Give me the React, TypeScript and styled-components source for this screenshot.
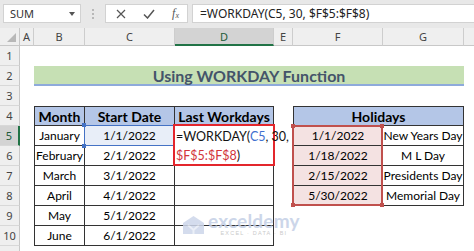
import React from "react";
import styled, { createGlobalStyle } from "styled-components";

const Global = createGlobalStyle`
  html, body { margin: 0; padding: 0; background: #fff; }
  body { width: 474px; height: 251px; overflow: hidden; font-family: Lato, "Liberation Sans", sans-serif; }
  #root { width: 474px; height: 251px; overflow: hidden; }
`;

const Page = styled.div`
  position: relative;
  width: 474px;
  height: 251px;
  overflow: hidden;
  background: #fff;
`;

/* ---------- formula bar ---------- */
const FormulaBar = styled.div`
  height: 28px;
  box-sizing: border-box;
  background: #e8e8e8;
  display: flex;
  align-items: flex-start;
  padding: 4px 0 0 3px;
`;

const NameBox = styled.div`
  width: 78px;
  height: 19px;
  box-sizing: border-box;
  background: #fff;
  border: 1px solid #d2d2d2;
  display: flex;
  align-items: center;
  justify-content: space-between;
  padding: 0 5px 0 6px;
  font: 11px "Noto Sans", sans-serif;
  color: #333;
`;

const Caret = styled.span`
  width: 0;
  height: 0;
  border-left: 3px solid transparent;
  border-right: 3px solid transparent;
  border-top: 4px solid #555;
`;

const Grip = styled.div`
  width: 24px;
  height: 19px;
  display: flex;
  flex-direction: column;
  align-items: center;
  justify-content: center;
  gap: 2px;
`;

const GripDot = styled.span`
  width: 2px;
  height: 2px;
  border-radius: 1px;
  background: #a8a8a8;
`;

const ActionBox = styled.div`
  width: 83px;
  height: 19px;
  box-sizing: border-box;
  background: #fff;
  border: 1px solid #d2d2d2;
  display: flex;
  align-items: center;
  justify-content: space-between;
  padding: 0 8px 0 10px;
  margin-right: 4px;
`;

const Fx = styled.span`
  font: italic 12px "Liberation Serif", serif;
  color: #555;
  & > sub {
    font-size: 8px;
    vertical-align: -1px;
  }
`;

const FormulaInput = styled.div`
  flex: 1;
  height: 19px;
  box-sizing: border-box;
  background: #fff;
  border: 1px solid #d2d2d2;
  border-right: none;
  display: flex;
  align-items: center;
  padding-left: 7px;
  font: 12px "Noto Sans", sans-serif;
  color: #222;
  white-space: nowrap;
`;

/* ---------- sheet ---------- */
const Sheet = styled.div`
  position: relative;
  display: grid;
  grid-template-columns: 20px 14px 51px 90px 99px 19px 90px 81px 81px;
  grid-template-rows: 18px repeat(11, 20px);
  width: 545px;
`;

const Corner = styled.div`
  background: #efefef;
  border-right: 1px solid #c8c8c8;
  border-bottom: 1px solid #c8c8c8;
  box-sizing: border-box;
  display: flex;
  align-items: flex-end;
  justify-content: flex-end;
  padding: 0 3px 3px 0;
`;

const SelectAll = styled.span`
  width: 0;
  height: 0;
  border-left: 9px solid transparent;
  border-bottom: 9px solid #b8b8b8;
`;

const ColHead = styled.div<{ $active?: boolean }>`
  box-sizing: border-box;
  background: ${(p) => (p.$active ? "#d3d3d3" : "#efefef")};
  border-right: 1px solid #cdcdcd;
  border-bottom: ${(p) => (p.$active ? "2px solid #217346" : "1px solid #c8c8c8")};
  display: flex;
  align-items: center;
  justify-content: center;
  font: 11px "Noto Sans", sans-serif;
  color: ${(p) => (p.$active ? "#1f5c3a" : "#444")};
`;

const RowHead = styled.div<{ $active?: boolean }>`
  box-sizing: border-box;
  background: ${(p) => (p.$active ? "#d3d3d3" : "#efefef")};
  border-right: ${(p) => (p.$active ? "2px solid #217346" : "1px solid #c8c8c8")};
  border-bottom: 1px solid #d8d8d8;
  display: flex;
  align-items: flex-end;
  justify-content: center;
  padding-bottom: 2px;
  font: 11px "Noto Sans", sans-serif;
  color: ${(p) => (p.$active ? "#1f5c3a" : "#444")};
`;

const Blank = styled.div``;

const Title = styled.div`
  grid-column: span 6;
  box-sizing: border-box;
  background: #c6e0b4;
  border-bottom: 2px solid #8eaadb;
  display: flex;
  align-items: center;
  justify-content: center;
  font: 700 16px Lato, sans-serif;
  color: #44546a;
`;

const HeadCell = styled.div<{ $span?: number; $l?: boolean }>`
  grid-column: span ${(p) => p.$span ?? 1};
  box-sizing: border-box;
  background: #b4c6e7;
  border-top: 1px solid #333;
  border-right: 1px solid #333;
  border-bottom: 1px solid #333;
  border-left: ${(p) => (p.$l ? "1px solid #333" : "none")};
  display: flex;
  align-items: center;
  justify-content: center;
  font: 700 14px Lato, sans-serif;
  color: #000;
`;

const tones = { plain: "#fff", picked: "#e8eef8", ref: "#f4e2e2" };
type Tone = keyof typeof tones;

const DataCell = styled.div<{ $tone?: Tone; $l?: boolean }>`
  box-sizing: border-box;
  background: ${(p) => tones[p.$tone ?? "plain"]};
  border-right: 1px solid #333;
  border-bottom: 1px solid #333;
  border-left: ${(p) => (p.$l ? "1px solid #333" : "none")};
  display: flex;
  align-items: center;
  justify-content: center;
  font: 12px Lato, sans-serif;
  color: #000;
  white-space: nowrap;
`;

/* ---------- overlays ---------- */
const RefBox = styled.div<{ $col: string; $row: string; $color: string; $w: number }>`
  position: absolute;
  grid-column: ${(p) => p.$col};
  grid-row: ${(p) => p.$row};
  top: -1px;
  left: -1px;
  right: 0;
  bottom: 0;
  border: ${(p) => p.$w}px solid ${(p) => p.$color};
  z-index: 2;
  pointer-events: none;
`;

const Handle = styled.span<{ $x: "left" | "right"; $y: "top" | "bottom"; $color: string }>`
  position: absolute;
  width: 4px;
  height: 4px;
  background: ${(p) => p.$color};
  ${(p) => p.$x}: -3px;
  ${(p) => p.$y}: -3px;
`;

const EditBox = styled.div`
  position: absolute;
  grid-column: 5 / 6;
  grid-row: 6 / 8;
  top: -2px;
  left: -2px;
  right: -1px;
  bottom: 0;
  z-index: 3;
  background: #fff;
  border: 2px solid #e3262c;
  box-sizing: border-box;
  padding: 1px 0 0 1px;
  font: 12.5px Lato, sans-serif;
  line-height: 19px;
  color: #111;
  white-space: nowrap;
  overflow: visible;
`;

const RefText = styled.span<{ $color: string }>`
  color: ${(p) => p.$color};
`;

const Watermark = styled.div`
  position: absolute;
  left: 183px;
  top: 212px;
  display: flex;
  align-items: center;
  gap: 4px;
  z-index: 4;
  opacity: 0.85;
  pointer-events: none;
`;

const WmText = styled.div`
  display: flex;
  flex-direction: column;
  align-items: center;
`;

const WmName = styled.span`
  font: 700 19px Lato, sans-serif;
  color: #c4cfe6;
  line-height: 18px;
  letter-spacing: 0.2px;
`;

const WmTag = styled.span`
  font: 5.5px "Liberation Sans", sans-serif;
  color: #c2c2c2;
  letter-spacing: 1.2px;
  line-height: 7px;
`;

/* ---------- data ---------- */
const cols = ["A", "B", "C", "D", "E", "F", "G", "H"];
const months = ["January", "February", "March", "April", "May", "June"];
const holidays: [string, string][] = [
  ["1/1/2022", "New Years Day"],
  ["1/18/2022", "M L Day"],
  ["2/15/2022", "Presidents Day"],
  ["5/30/2022", "Memorial Day"],
];

const handles = (color: string, all = true) => (
  <>
    <Handle $x="left" $y="top" $color={color} />
    <Handle $x="left" $y="bottom" $color={color} />
    {all && <Handle $x="right" $y="top" $color={color} />}
    {all && <Handle $x="right" $y="bottom" $color={color} />}
  </>
);

export default function App() {
  const rows: React.ReactNode[] = [];

  for (let r = 1; r <= 11; r++) {
    rows.push(
      <RowHead key={`rh${r}`} $active={r === 5}>
        {r <= 10 ? r : ""}
      </RowHead>
    );
    if (r === 2) {
      rows.push(<Blank key="2a" />);
      rows.push(<Title key="title">Using WORKDAY Function</Title>);
      rows.push(<Blank key="2h" />);
      continue;
    }
    if (r === 4) {
      rows.push(<Blank key="4a" />);
      rows.push(<HeadCell key="h1" $l>Month</HeadCell>);
      rows.push(<HeadCell key="h2">Start Date</HeadCell>);
      rows.push(<HeadCell key="h3">Last Workdays</HeadCell>);
      rows.push(<Blank key="4e" />);
      rows.push(<HeadCell key="h4" $l $span={2}>Holidays</HeadCell>);
      rows.push(<Blank key="4h" />);
      continue;
    }
    if (r >= 5 && r <= 10) {
      const i = r - 5;
      const hol = holidays[i];
      rows.push(<Blank key={`${r}a`} />);
      rows.push(<DataCell key={`${r}b`} $l>{months[i]}</DataCell>);
      rows.push(
        <DataCell key={`${r}c`} $tone={r === 5 ? "picked" : "plain"}>
          {i + 1}/1/2022
        </DataCell>
      );
      rows.push(<DataCell key={`${r}d`} />);
      rows.push(<Blank key={`${r}e`} />);
      if (hol) {
        rows.push(<DataCell key={`${r}f`} $l $tone="ref">{hol[0]}</DataCell>);
        rows.push(<DataCell key={`${r}g`}>{hol[1]}</DataCell>);
      } else {
        rows.push(<Blank key={`${r}f`} />);
        rows.push(<Blank key={`${r}g`} />);
      }
      rows.push(<Blank key={`${r}h`} />);
      continue;
    }
    for (let c = 0; c < 8; c++) rows.push(<Blank key={`${r}-${c}`} />);
  }

  return (
    <Page>
      <Global />
      <FormulaBar>
        <NameBox>
          SUM
          <Caret />
        </NameBox>
        <Grip>
          <GripDot />
          <GripDot />
          <GripDot />
        </Grip>
        <ActionBox>
          <svg width="10" height="10" viewBox="0 0 10 10">
            <path d="M1 1 L9 9 M9 1 L1 9" stroke="#555" strokeWidth="1.2" fill="none" />
          </svg>
          <svg width="12" height="10" viewBox="0 0 12 10">
            <path d="M1 5.5 L4.5 9 L11 1" stroke="#555" strokeWidth="1.5" fill="none" />
          </svg>
          <Fx>
            f<sub>x</sub>
          </Fx>
        </ActionBox>
        <FormulaInput>=WORKDAY(C5, 30, $F$5:$F$8)</FormulaInput>
      </FormulaBar>

      <Sheet>
        <Corner>
          <SelectAll />
        </Corner>
        {cols.map((c) => (
          <ColHead key={c} $active={c === "D"}>
            {c === "H" ? "" : c}
          </ColHead>
        ))}
        {rows}

        <RefBox $col="4 / 5" $row="6 / 7" $color="#4472c4" $w={1}>
          {handles("#4472c4", false)}
        </RefBox>
        <RefBox $col="7 / 8" $row="6 / 10" $color="#c0504d" $w={2}>
          {handles("#c0504d")}
        </RefBox>
        <EditBox>
          =WORKDAY(<RefText $color="#3f6fcf">C5</RefText>, 30,
          <br />
          <RefText $color="#d2353b">$F$5:$F$8</RefText>)
        </EditBox>
      </Sheet>

      <Watermark>
        <svg width="21" height="18" viewBox="0 0 21 18">
          <path d="M0 7 L10.5 0 L21 7 L21 18 L0 18 Z" fill="#cdd6ea" />
          <path d="M5 9 L10.5 14 L16 9 M10.5 14 L10.5 18" stroke="#e8edf6" strokeWidth="2" fill="none" />
        </svg>
        <WmText>
          <WmName>exceldemy</WmName>
          <WmTag>EXCEL · DATA · BI</WmTag>
        </WmText>
      </Watermark>
    </Page>
  );
}
